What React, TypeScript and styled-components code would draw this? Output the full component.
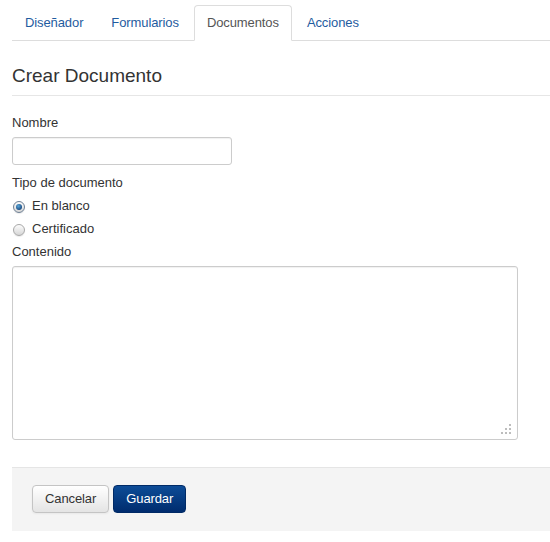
import React, { useState } from "react";
import styled, { createGlobalStyle } from "styled-components";

const Global = createGlobalStyle`
  html, body { margin: 0; padding: 0; background: #fff; }
  body {
    font-family: "Liberation Sans", Arial, sans-serif;
    font-size: 13px;
    line-height: 18px;
    color: #333;
  }
`;

const Page = styled.div`
  padding: 5px 0 0 12px;
`;

const Tabs = styled.ul`
  display: flex;
  list-style: none;
  margin: 0;
  padding: 0;
  border-bottom: 1px solid #ddd;
`;

const Tab = styled.li<{ $active?: boolean }>`
  margin-right: 2px;
  margin-bottom: -1px;
  padding: 8px 12px;
  line-height: 18px;
  letter-spacing: -0.1px;
  border: 1px solid ${(p) => (p.$active ? "#ddd" : "transparent")};
  border-bottom-color: ${(p) => (p.$active ? "#fff" : "transparent")};
  border-radius: 4px 4px 0 0;
  background: ${(p) => (p.$active ? "#fff" : "transparent")};
  color: ${(p) => (p.$active ? "#555" : "#1f5ca0")};
  cursor: pointer;
`;

const Header = styled.h2`
  margin: 23px 0 0;
  padding-bottom: 8px;
  font-size: 19px;
  font-weight: normal;
  line-height: 23px;
  color: #333;
  border-bottom: 1px solid #e6e6e6;
`;

const Form = styled.form`
  padding-top: 18px;
`;

const Label = styled.div`
  margin-bottom: 5px;
  line-height: 18px;
`;

const TextInput = styled.input`
  display: block;
  box-sizing: border-box;
  width: 220px;
  height: 28px;
  margin: 0 0 9px;
  padding: 4px 6px;
  border: 1px solid #ccc;
  border-radius: 3px;
  box-shadow: inset 0 1px 1px rgba(0, 0, 0, 0.06);
  font: inherit;
  outline: none;
`;

const RadioRow = styled.label`
  display: flex;
  align-items: center;
  gap: 7px;
  height: 18px;
  margin-bottom: 5px;
  cursor: pointer;
`;

const RadioDot = styled.span<{ $checked?: boolean }>`
  position: relative;
  box-sizing: border-box;
  width: 12px;
  height: 12px;
  margin-left: 1px;
  margin-top: 2px;
  border-radius: 50%;
  border: 1px solid ${(p) => (p.$checked ? "#6d7f94" : "#a8a8a8")};
  background: linear-gradient(#fdfdfd, #d6d6d6);
  box-shadow: 0 1px 1px rgba(0, 0, 0, 0.08);
  &::after {
    content: "";
    display: ${(p) => (p.$checked ? "block" : "none")};
    position: absolute;
    left: 2px;
    top: 2px;
    width: 6px;
    height: 6px;
    border-radius: 50%;
    background: radial-gradient(circle at 40% 35%, #5aa7d8, #1d4f86 70%);
  }
`;

const AreaWrap = styled.div`
  position: relative;
  width: 506px;
`;

const TextArea = styled.textarea`
  display: block;
  box-sizing: border-box;
  width: 506px;
  height: 174px;
  margin: 0;
  padding: 4px 6px;
  border: 1px solid #ccc;
  border-radius: 3px;
  box-shadow: inset 0 1px 1px rgba(0, 0, 0, 0.06);
  font: inherit;
  resize: none;
  outline: none;
`;

const Grip = styled.svg`
  position: absolute;
  right: 6px;
  bottom: 5px;
  pointer-events: none;
`;

const Actions = styled.div`
  display: flex;
  gap: 4px;
  margin-top: 27px;
  padding: 17px 20px 18px;
  background: #f4f4f4;
  border-top: 1px solid #e5e5e5;
`;

const Button = styled.button<{ $primary?: boolean }>`
  box-sizing: border-box;
  height: 28px;
  padding: 4px 12px;
  font-family: inherit;
  font-size: 13px;
  line-height: 18px;
  letter-spacing: -0.1px;
  border-radius: 4px;
  cursor: pointer;
  color: ${(p) => (p.$primary ? "#fff" : "#333")};
  border: 1px solid ${(p) => (p.$primary ? "#002a66" : "#c4c4c4")};
  background: ${(p) =>
    p.$primary
      ? "linear-gradient(#0d4c97, #002c6e)"
      : "linear-gradient(#ffffff, #e4e4e4)"};
  box-shadow: ${(p) =>
    p.$primary ? "none" : "inset 0 1px 0 rgba(255,255,255,.3), 0 1px 2px rgba(0,0,0,.05)"};
`;

const tabs = ["Diseñador", "Formularios", "Documentos", "Acciones"];

export default function App() {
  const [tipo, setTipo] = useState("blanco");
  return (
    <Page>
      <Global />
      <Tabs>
        {tabs.map((t) => (
          <Tab key={t} $active={t === "Documentos"}>
            {t}
          </Tab>
        ))}
      </Tabs>
      <Header>Crear Documento</Header>
      <Form onSubmit={(e) => e.preventDefault()}>
        <Label>Nombre</Label>
        <TextInput type="text" />
        <Label>Tipo de documento</Label>
        <RadioRow onClick={() => setTipo("blanco")}>
          <RadioDot $checked={tipo === "blanco"} />
          En blanco
        </RadioRow>
        <RadioRow onClick={() => setTipo("cert")}>
          <RadioDot $checked={tipo === "cert"} />
          Certificado
        </RadioRow>
        <Label>Contenido</Label>
        <AreaWrap>
          <TextArea />
          <Grip width="12" height="12" viewBox="0 0 12 12">
            <g fill="#bdbdbd">
              <rect x="9" y="1" width="2" height="2" />
              <rect x="5" y="5" width="2" height="2" />
              <rect x="9" y="5" width="2" height="2" />
              <rect x="1" y="9" width="2" height="2" />
              <rect x="5" y="9" width="2" height="2" />
              <rect x="9" y="9" width="2" height="2" />
            </g>
          </Grip>
        </AreaWrap>
        <Actions>
          <Button type="button">Cancelar</Button>
          <Button type="submit" $primary>
            Guardar
          </Button>
        </Actions>
      </Form>
    </Page>
  );
}
